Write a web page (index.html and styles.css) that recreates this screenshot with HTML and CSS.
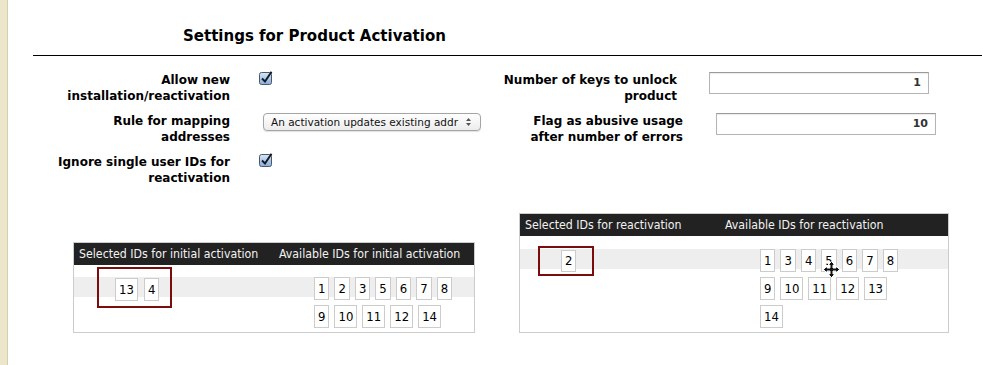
FILE: index.html
```html
<!DOCTYPE html>
<html lang="en">
<head>
    <meta charset="UTF-8">
    <title>Settings for Product Activation</title>
    <link rel="stylesheet" href="styles.css">
</head>
<body>
<div class="layout">
    <div class="rail"></div>
    <div class="main">
        <h2>Settings for Product Activation</h2>

        <div class="form">
            <div class="form-col left">
                <div class="field">
                    <div class="label">Allow new<br>installation/reactivation</div>
                    <div class="control">
                        <svg class="check" width="14" height="14" viewBox="0 0 14 14">
                            <defs>
                                <linearGradient id="cb" x1="0" y1="0" x2="0" y2="1">
                                    <stop offset="0" stop-color="#d7e6f6"/>
                                    <stop offset="1" stop-color="#86aedb"/>
                                </linearGradient>
                            </defs>
                            <rect x="0.5" y="1.5" width="12" height="12" rx="2" fill="url(#cb)" stroke="#4d5866"/>
                            <path d="M3 7.5 L6 10.5 L12.5 0.8" fill="none" stroke="#151a22" stroke-width="2"/>
                        </svg>
                    </div>
                </div>
                <div class="field">
                    <div class="label">Rule for mapping<br>addresses</div>
                    <div class="control">
                        <div class="select">
                            <span class="select-text">An activation updates existing addr</span>
                            <svg width="7" height="10" viewBox="0 0 7 10">
                                <path d="M1 4 L3.5 1 L6 4 Z M1 6 L3.5 9 L6 6 Z" fill="#555"/>
                            </svg>
                        </div>
                    </div>
                </div>
                <div class="field">
                    <div class="label">Ignore single user IDs for<br>reactivation</div>
                    <div class="control">
                        <svg class="check" width="14" height="14" viewBox="0 0 14 14">
                            <rect x="0.5" y="1.5" width="12" height="12" rx="2" fill="url(#cb)" stroke="#4d5866"/>
                            <path d="M3 7.5 L6 10.5 L12.5 0.8" fill="none" stroke="#151a22" stroke-width="2"/>
                        </svg>
                    </div>
                </div>
            </div>

            <div class="form-col right">
                <div class="field">
                    <div class="label">Number of keys to unlock<br>product</div>
                    <div class="control"><div class="input">1</div></div>
                </div>
                <div class="field shifted">
                    <div class="label">Flag as abusive usage<br>after number of errors</div>
                    <div class="control"><div class="input">10</div></div>
                </div>
            </div>
        </div>

        <div class="tables">
            <div class="id-table initial">
                <div class="id-head">
                    <div class="id-col">Selected IDs for initial activation</div>
                    <div class="id-col">Available IDs for initial activation</div>
                </div>
                <div class="id-body">
                    <div class="id-col">
                        <div class="selected">
                            <span class="chip">13</span>
                            <span class="chip">4</span>
                        </div>
                    </div>
                    <div class="id-col">
                        <div class="chips">
                            <span class="chip">1</span>
                            <span class="chip">2</span>
                            <span class="chip">3</span>
                            <span class="chip">5</span>
                            <span class="chip">6</span>
                            <span class="chip">7</span>
                            <span class="chip">8</span>
                            <span class="chip">9</span>
                            <span class="chip">10</span>
                            <span class="chip">11</span>
                            <span class="chip">12</span>
                            <span class="chip">14</span>
                        </div>
                    </div>
                </div>
            </div>

            <div class="id-table reactivation">
                <div class="id-head">
                    <div class="id-col">Selected IDs for reactivation</div>
                    <div class="id-col">Available IDs for reactivation</div>
                </div>
                <div class="id-body">
                    <div class="id-col">
                        <div class="selected">
                            <span class="chip">2</span>
                        </div>
                    </div>
                    <div class="id-col">
                        <div class="chips">
                            <span class="chip">1</span>
                            <span class="chip">3</span>
                            <span class="chip">4</span>
                            <span class="chip">5</span>
                            <span class="chip">6</span>
                            <span class="chip">7</span>
                            <span class="chip">8</span>
                            <span class="chip">9</span>
                            <span class="chip">10</span>
                            <span class="chip">11</span>
                            <span class="chip">12</span>
                            <span class="chip">13</span>
                            <span class="chip">14</span>
                        </div>
                    </div>
                </div>
                <!-- mouse cursor over the list -->
                <svg class="cursor" width="17" height="17" viewBox="0 0 17 17">
                    <path d="M8.5 0.5 L12 4 L10 4 L10 7 L13 7 L13 5 L16.5 8.5 L13 12 L13 10 L10 10 L10 13 L12 13 L8.5 16.5 L5 13 L7 13 L7 10 L4 10 L4 12 L0.5 8.5 L4 5 L4 7 L7 7 L7 4 L5 4 Z" fill="#111" stroke="#fff" stroke-width="1"/>
                </svg>
            </div>
        </div>
    </div>
</div>
</body>
</html>
```

FILE: styles.css
```css
* {
    box-sizing: border-box;
}
body {
    margin: 0;
    background-color: #fff;
    font-family: 'DejaVu Sans Condensed', 'DejaVu Sans', sans-serif;
    color: #000;
}
.layout {
    display: flex;
    min-height: 365px;
}
.rail {
    width: 8px;
    background-color: #ece6cb;
    border-right: 1px solid #d5cfb2;
}
.main {
    flex: 1;
    padding-left: 25px;
}
h2 {
    margin: 0;
    padding: 26px 0 9px 150px;
    line-height: 20px;
    font-family: 'DejaVu Sans', sans-serif;
    font-size: 15px;
    font-weight: bold;
    border-bottom: 1px solid #000;
}

/* settings form */
.form {
    display: flex;
    margin-top: 16px;
}
.form-col {
    display: flex;
    flex-direction: column;
    gap: 9px;
}
.form-col.left {
    width: 457px;
}
.field {
    display: flex;
    align-items: flex-start;
}
.label {
    font-family: 'DejaVu Sans', sans-serif;
    font-size: 12px;
    font-weight: bold;
    line-height: 16px;
    text-align: right;
}
.left .label {
    width: 197px;
}
.left .control {
    margin-left: 29px;
}
.right .label {
    width: 187px;
}
.right .control {
    margin-left: 32px;
}
.right .shifted {
    padding-left: 6px;
}
.right .shifted .control {
    margin-left: 33px;
}
.check {
    display: block;
    margin-top: -1px;
}
.select {
    display: flex;
    align-items: center;
    width: 218px;
    height: 18px;
    margin-left: 4px;
    padding: 0 8px 0 7px;
    border: 1px solid #a5a5a5;
    border-radius: 4px;
    background: linear-gradient(#ffffff, #ececec);
    box-shadow: 0 1px 1px rgba(0, 0, 0, 0.12);
}
.select-text {
    flex: 1;
    white-space: nowrap;
    font-family: 'DejaVu Sans', sans-serif;
    font-size: 10.5px;
    color: #111;
}
.select svg {
    margin-left: 6px;
}
.input {
    width: 220px;
    height: 22px;
    padding-right: 7px;
    border: 1px solid #b4b4b4;
    border-top-color: #9a9a9a;
    box-shadow: inset 0 1px 1px rgba(0, 0, 0, 0.08);
    text-align: right;
    font-family: 'DejaVu Sans', sans-serif;
    font-size: 11px;
    font-weight: bold;
    line-height: 20px;
    color: #333;
}

/* id tables */
.tables {
    display: flex;
    align-items: flex-end;
    gap: 44px;
    margin-top: 27px;
    padding-left: 40px;
}
.id-table {
    position: relative;
    border: 1px solid #ccc;
}
.id-table.initial {
    width: 402px;
}
.id-table.reactivation {
    width: 430px;
}
.id-head {
    display: flex;
    height: 22px;
    background-color: #222;
    color: #f2f2f2;
    font-size: 12.25px;
    line-height: 22px;
}
.id-head .id-col {
    padding-left: 5px;
}
.id-head .id-col:first-child,
.id-body .id-col:first-child {
    width: 200px;
}
.id-body {
    display: flex;
    background: linear-gradient(#fff 12px, #eee 12px, #eee 32px, #fff 32px);
}
.reactivation .id-body {
    background: linear-gradient(#fff 13px, #eee 13px, #eee 33px, #fff 33px);
}
.id-body .id-col:last-child {
    padding: 12px 0 4px 40px;
}
.reactivation .id-body .id-col:last-child {
    padding-top: 13px;
}
.chips {
    display: flex;
    flex-wrap: wrap;
    gap: 5px 5px;
    width: 150px;
}
.chip {
    display: block;
    height: 23px;
    padding: 0 3px;
    border: 1px solid #ccc;
    background-color: #fff;
    font-size: 13px;
    line-height: 21px;
    text-align: center;
}
.selected {
    display: inline-flex;
    gap: 6px;
    border: 2px solid #7d0b0b;
}
.initial .selected {
    margin: 2px 0 0 23px;
    padding: 9px 11px 5px 16px;
}
.reactivation .selected {
    margin: 10px 0 0 18px;
    padding: 2px 16px 2px 21px;
}
.reactivation .selected .chip {
    height: 22px;
    line-height: 20px;
}
.cursor {
    position: absolute;
    left: 303px;
    top: 47px;
}
```
